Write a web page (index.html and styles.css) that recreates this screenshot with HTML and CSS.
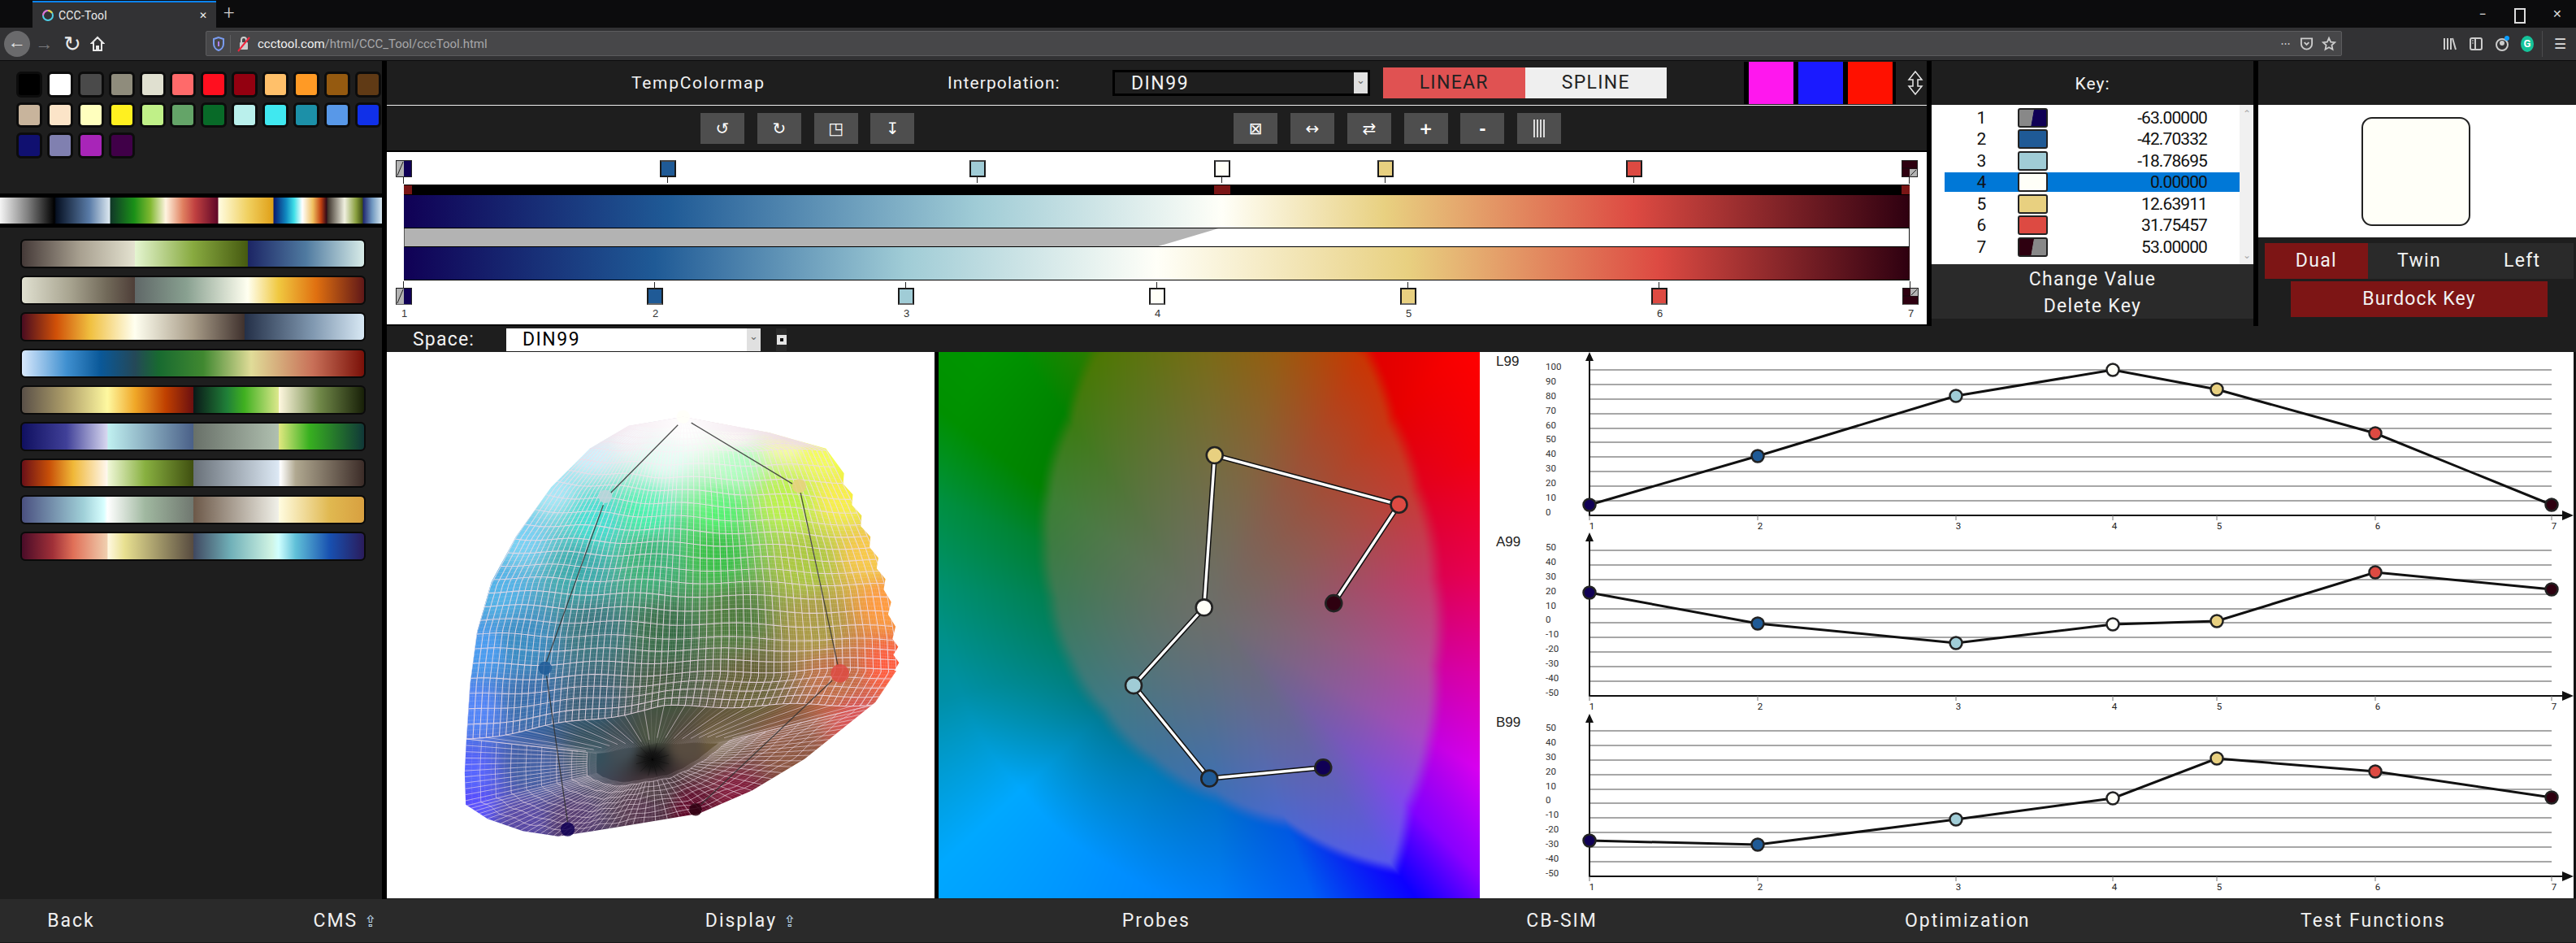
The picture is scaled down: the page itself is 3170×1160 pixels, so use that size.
FILE: index.html
```html
<!DOCTYPE html>
<html lang="en">
<head>
<meta charset="utf-8">
<title>CCC-Tool</title>
<link rel="stylesheet" href="styles.css">
</head>
<body>
<header class="chrome">
  <div class="tabbar">
    <div class="tab">
      <svg class="favicon" viewBox="0 0 16 20"><circle cx="8" cy="10" r="6" fill="none" stroke="#4fd0e8" stroke-width="2"/><path d="M8 4a6 6 0 0 0-6 6" fill="none" stroke="#e86ad0" stroke-width="2"/><path d="M8 4a6 6 0 0 1 5 3" fill="none" stroke="#e8d040" stroke-width="2"/></svg>
      <span class="tab-title">CCC-Tool</span>
      <span class="tab-close">✕</span>
    </div>
    <span class="tab-new">+</span>
    <div class="win-controls"><span>−</span><span class="win-max"></span><span class="win-x">✕</span></div>
  </div>
  <div class="toolbar">
    <span class="nav-back">←</span>
    <span class="nav-ico dim">→</span>
    <span class="nav-ico big">↻</span>
    <svg class="home" viewBox="0 0 18 20"><path d="M9 2 2 9h2v9h4v-5h2v5h4V9h2z" fill="none" stroke="#e8e8e8" stroke-width="2"/></svg>
    <div class="urlbar">
      <svg class="shield" viewBox="0 0 16 20"><path d="M8 2 2 4v6c0 4 3 7 6 8 3-1 6-4 6-8V4z" fill="none" stroke="#7a9cf0" stroke-width="2"/><path d="M8 7v6" stroke="#b080f0" stroke-width="2"/></svg>
      <span class="url-sep"></span>
      <svg class="lock" viewBox="0 0 16 20"><rect x="3" y="8" width="10" height="9" rx="1" fill="#ccc"/><path d="M5 8V5a3 3 0 0 1 6 0v3" fill="none" stroke="#ccc" stroke-width="2"/><path d="M1 19 15 2" stroke="#f0243c" stroke-width="2"/></svg>
      <span class="url"><b>ccctool.com</b>/html/CCC_Tool/cccTool.html</span>
      <span class="url-dots">•••</span>
      <svg class="url-ico" viewBox="0 0 18 20"><path d="M2 3h14v7a7 7 0 0 1-14 0z" fill="none" stroke="#ccc" stroke-width="2"/><path d="m6 8 3 3 3-3" fill="none" stroke="#ccc" stroke-width="2"/></svg>
      <svg class="url-ico star" viewBox="0 0 20 20"><path d="m10 2 2.4 5.4 5.6.6-4.2 3.8 1.2 5.7L10 14.700l-5 2.800 1.200-5.700L2 8l5.600-.6z" fill="none" stroke="#ccc" stroke-width="2"/></svg>
    </div>
    <svg class="tool-ico lib" viewBox="0 0 18 20"><path d="M2 3v14M6 3v14M10 3v14M12 3l4 14" fill="none" stroke="#ccc" stroke-width="2"/></svg>
    <svg class="tool-ico" viewBox="0 0 18 20"><rect x="2" y="3" width="14" height="14" rx="2" fill="none" stroke="#ccc" stroke-width="2"/><path d="M8 3v14" stroke="#ccc" stroke-width="2"/><path d="M4 6h2M4 9h2" stroke="#ccc"/></svg>
    <svg class="tool-ico" viewBox="0 0 18 20"><circle cx="9" cy="11" r="7" fill="none" stroke="#ccc" stroke-width="2"/><circle cx="9" cy="9" r="3" fill="#ccc"/><circle cx="15" cy="3" r="3" fill="#0a9dff"/></svg>
    <span class="grammarly">G</span>
    <span class="tool-sep"></span>
    <span class="hamburger">☰</span>
  </div>
</header>

<main class="app">
  <aside class="sidebar">
    <div class="palette">
      <span class="sw p1"></span><span class="sw p2"></span><span class="sw p3"></span><span class="sw p4"></span><span class="sw p5"></span><span class="sw p6"></span><span class="sw p7"></span><span class="sw p8"></span><span class="sw p9"></span><span class="sw p10"></span><span class="sw p11"></span><span class="sw p12"></span>
      <span class="sw p13"></span><span class="sw p14"></span><span class="sw p15"></span><span class="sw p16"></span><span class="sw p17"></span><span class="sw p18"></span><span class="sw p19"></span><span class="sw p20"></span><span class="sw p21"></span><span class="sw p22"></span><span class="sw p23"></span><span class="sw p24"></span>
      <span class="sw p25"></span><span class="sw p26"></span><span class="sw p27"></span><span class="sw p28"></span>
    </div>
    <div class="strip"></div>
    <div class="bands">
      <div class="band b1"></div><div class="band b2"></div><div class="band b3"></div>
      <div class="band b4"></div><div class="band b5"></div><div class="band b6"></div>
      <div class="band b7"></div><div class="band b8"></div><div class="band b9"></div>
    </div>
  </aside>

  <section class="content">
    <div class="editor">
      <div class="workspace">
        <div class="ws-head">
          <span class="ws-name">TempColormap</span>
          <span class="ws-interp">Interpolation:</span>
          <div class="select dark"><span>DIN99</span><i class="sel-arrow">⌄</i></div>
          <div class="toggle"><span class="tog-on">LINEAR</span><span class="tog-off">SPLINE</span></div>
          <div class="nan-swatches"><span class="ns-m"></span><span class="ns-b"></span><span class="ns-r"></span></div>
          <svg class="updown" viewBox="0 0 24 30"><path d="M12 1 4 11h5v8H4l8 10 8-10h-5v-8h5z" fill="none" stroke="#e8e8e8" stroke-width="1.500"/></svg>
        </div>
        <div class="ws-tools">
          <span class="tbtn">↺</span><span class="tbtn">↻</span><span class="tbtn">◳</span><span class="tbtn">↧</span>
          <span class="tbtn group2">⊠</span><span class="tbtn">↔</span><span class="tbtn">⇄</span><span class="tbtn bold">+</span><span class="tbtn bold">-</span>
          <span class="tbtn"><svg class="bars" viewBox="0 0 14 22"><path d="M1 0v22M5 0v22M9 0v22M13 0v22" stroke="#fff" stroke-width="1.600"/></svg></span>
        </div>
        <div class="ramp">
          <div class="keyrow keys-a">
            <span class="key k1 split pos-a0"><svg viewBox="0 0 20 21"><rect width="10" height="21" fill="#b3b3b3"/><rect x="10" width="10" height="21" fill="#100055"/><path d="M1 20 9 1" stroke="#111"/></svg></span>
            <span class="key k2 pos-a1"></span>
            <span class="key k3 pos-a2"></span>
            <span class="key k4 pos-a3"></span>
            <span class="key k5 pos-a4"></span>
            <span class="key k6 pos-a5"></span>
            <span class="key k7 split pos-a6"><svg viewBox="0 0 20 21"><rect width="20" height="21" fill="#2e0010"/><path d="M0 10h20" stroke="#111"/><rect x="10" y="11" width="10" height="10" fill="#b3b3b3"/><path d="M11 20 19 12" stroke="#111"/></svg></span>
          </div>
          <div class="markbar"><i class="mark pos-a0"></i><i class="mark pos-a3"></i><i class="mark pos-a6 last"></i></div>
          <div class="gbar upper"></div>
          <div class="tilt"><div class="tilt-fill"></div></div>
          <div class="gbar lower"></div>
          <div class="keyrow keys-b">
            <span class="key k1 split pos-b0"><svg viewBox="0 0 20 21"><rect width="10" height="21" fill="#b3b3b3"/><rect x="10" width="10" height="21" fill="#100055"/><path d="M1 20 9 1" stroke="#111"/></svg></span>
            <span class="key k2 pos-b1"></span>
            <span class="key k3 pos-b2"></span>
            <span class="key k4 pos-b3"></span>
            <span class="key k5 pos-b4"></span>
            <span class="key k6 pos-b5"></span>
            <span class="key k7 split pos-b6"><svg viewBox="0 0 20 21"><rect width="20" height="21" fill="#2e0010"/><path d="M0 10h20" stroke="#111"/><rect x="10" width="10" height="10" fill="#b3b3b3"/><path d="M11 9 19 1" stroke="#111"/></svg></span>
          </div>
          <div class="labelrow">
            <span class="pos-b0">1</span><span class="pos-b1">2</span><span class="pos-b2">3</span><span class="pos-b3">4</span><span class="pos-b4">5</span><span class="pos-b5">6</span><span class="pos-b6">7</span>
          </div>
        </div>
      </div>

      <div class="keypanel">
        <div class="panel-title">Key:</div>
        <div class="keylist">
          <div class="rows">
            <div class="row"><span class="num">1</span><span class="ksw hk1"></span><span class="val">-63.00000</span></div>
            <div class="row"><span class="num">2</span><span class="ksw hk2"></span><span class="val">-42.70332</span></div>
            <div class="row"><span class="num">3</span><span class="ksw hk3"></span><span class="val">-18.78695</span></div>
            <div class="row selected"><span class="num">4</span><span class="ksw hk4"></span><span class="val">0.00000</span></div>
            <div class="row"><span class="num">5</span><span class="ksw hk5"></span><span class="val">12.63911</span></div>
            <div class="row"><span class="num">6</span><span class="ksw hk6"></span><span class="val">31.75457</span></div>
            <div class="row"><span class="num">7</span><span class="ksw hk7"></span><span class="val">53.00000</span></div>
          </div>
          <div class="scroll"><span>⌃</span><span>⌄</span></div>
        </div>
        <div class="key-actions"><span>Change Value</span><span>Delete Key</span></div>
      </div>

      <div class="detail">
        <div class="detail-top"></div>
        <div class="detail-preview"><div class="big-swatch"></div></div>
        <div class="modes"><span class="mode on">Dual</span><span class="mode">Twin</span><span class="mode">Left</span></div>
        <div class="burdock">Burdock Key</div>
      </div>
    </div>

    <div class="space-row">
      <span class="space-label">Space:</span>
      <div class="select light"><span>DIN99</span><i class="sel-arrow">⌄</i></div>
      <span class="space-btn"><i></i></span>
    </div>

    <div class="views">
      <div class="view3d">
        <canvas id="gamut3d" width="674" height="672"></canvas>
        <svg class="overlay" viewBox="14 6 1554 1550">
          <path class="path3d" d="M527 1340 467 925M467 885 628 440M650 405 840 213M878 207 1165 380M1188 405 1294 895M1278 938 905 1290"/>
          <circle class="k1 o3" cx="527" cy="1360" r="20"/><circle class="k2 o3" cx="463" cy="903" r="19"/><circle class="k3 o3 pale" cx="634" cy="416" r="19"/><circle class="k4 o3" cx="855" cy="190" r="19"/><circle class="k5 o3" cx="1184" cy="386" r="20"/><circle class="k6 o3" cx="1300" cy="918" r="26"/><circle class="k7 o3" cx="890" cy="1304" r="18"/>
        </svg>
      </div>
      <div class="view2d">
        <canvas id="gamut2d" width="666" height="672"></canvas>
        <svg class="overlay" viewBox="12 8 1535 1550">
          <polyline class="pb" points="1103,1187 780,1218 565,954 765,733 795,301 1318,441 1133,721"/>
          <polyline class="pw" points="1103,1187 780,1218 565,954 765,733 795,301 1318,441 1133,721"/>
          <circle class="k1 o2" cx="1103" cy="1187" r="23"/><circle class="k2 o2" cx="780" cy="1218" r="23"/><circle class="k3 o2" cx="565" cy="954" r="23"/><circle class="k4 o2" cx="765" cy="733" r="23"/><circle class="k5 o2" cx="795" cy="301" r="23"/><circle class="k6 o2" cx="1318" cy="441" r="23"/><circle class="k7 o2" cx="1133" cy="721" r="23"/>
        </svg>
      </div>
      <div class="charts">
        <svg class="chart-svg" viewBox="1821 433 1349 672">
          <rect x="3167" y="433" width="3" height="672" fill="#111"/>
          <path class="grid" d="M1957 455H3140M1957 473H3140M1957 491H3140M1957 509H3140M1957 527H3140M1957 544H3140M1957 562H3140M1957 580H3140M1957 598H3140M1957 616H3140M1957 677H3140M1957 695H3140M1957 713H3140M1957 731H3140M1957 749H3140M1957 766H3140M1957 784H3140M1957 802H3140M1957 820H3140M1957 838H3140M1957 899H3140M1957 917H3140M1957 935H3140M1957 953H3140M1957 971H3140M1957 988H3140M1957 1006H3140M1957 1024H3140M1957 1042H3140M1957 1060H3140"/>
          <path class="axis" d="M1956 440V634H3156M1956 662V856H3156M1956 885V1078H3156"/>
          <path class="tick" d="M1956 634v6M2163 634v6M2407 634v6M2600 634v6M2728 634v6M2923 634v6M3140 634v6M1956 856v6M2163 856v6M2407 856v6M2600 856v6M2728 856v6M2923 856v6M3140 856v6M1956 1078v6M2163 1078v6M2407 1078v6M2600 1078v6M2728 1078v6M2923 1078v6M3140 1078v6"/>
          <path class="arrow" d="M1956 433l5 11h-10zM1956 655l5 11h-10zM1956 878l5 11h-10zM3167 634l-14-6v12zM3167 856l-14-6v12zM3167 1078l-14-6v12z"/>

          <text class="ctitle" x="1841" y="450">L99</text>
          <text class="ctitle" x="1841" y="672">A99</text>
          <text class="ctitle" x="1841" y="894">B99</text>

          <g class="ylab">
            <text x="1902" y="455">100</text><text x="1902" y="473">90</text><text x="1902" y="491">80</text><text x="1902" y="509">70</text><text x="1902" y="527">60</text><text x="1902" y="544">50</text><text x="1902" y="562">40</text><text x="1902" y="580">30</text><text x="1902" y="598">20</text><text x="1902" y="616">10</text><text x="1902" y="634">0</text>
            <text x="1902" y="677">50</text><text x="1902" y="695">40</text><text x="1902" y="713">30</text><text x="1902" y="731">20</text><text x="1902" y="749">10</text><text x="1902" y="766">0</text><text x="1902" y="784">-10</text><text x="1902" y="802">-20</text><text x="1902" y="820">-30</text><text x="1902" y="838">-40</text><text x="1902" y="856">-50</text>
            <text x="1902" y="899">50</text><text x="1902" y="917">40</text><text x="1902" y="935">30</text><text x="1902" y="953">20</text><text x="1902" y="971">10</text><text x="1902" y="988">0</text><text x="1902" y="1006">-10</text><text x="1902" y="1024">-20</text><text x="1902" y="1042">-30</text><text x="1902" y="1060">-40</text><text x="1902" y="1078">-50</text>
          </g>
          <g class="xlab">
            <text x="1959" y="651">1</text><text x="2166" y="651">2</text><text x="2410" y="651">3</text><text x="2602" y="651">4</text><text x="2731" y="651">5</text><text x="2926" y="651">6</text><text x="3143" y="651">7</text>
            <text x="1959" y="873">1</text><text x="2166" y="873">2</text><text x="2410" y="873">3</text><text x="2602" y="873">4</text><text x="2731" y="873">5</text><text x="2926" y="873">6</text><text x="3143" y="873">7</text>
            <text x="1959" y="1095">1</text><text x="2166" y="1095">2</text><text x="2410" y="1095">3</text><text x="2602" y="1095">4</text><text x="2731" y="1095">5</text><text x="2926" y="1095">6</text><text x="3143" y="1095">7</text>
          </g>

          <polyline class="cline" points="1956,621 2163,561 2407,487 2600,455 2728,479 2923,533 3140,621"/>
          <polyline class="cline" points="1956,729 2163,767 2407,791 2600,768 2728,764 2923,704 3140,725"/>
          <polyline class="cline" points="1956,1034 2163,1039 2407,1008 2600,982 2728,933 2923,949 3140,981"/>
          <g class="dots">
            <circle class="k1" cx="1956" cy="621"/><circle class="k2" cx="2163" cy="561"/><circle class="k3" cx="2407" cy="487"/><circle class="k4" cx="2600" cy="455"/><circle class="k5" cx="2728" cy="479"/><circle class="k6" cx="2923" cy="533"/><circle class="k7" cx="3140" cy="621"/>
            <circle class="k1" cx="1956" cy="729"/><circle class="k2" cx="2163" cy="767"/><circle class="k3" cx="2407" cy="791"/><circle class="k4" cx="2600" cy="768"/><circle class="k5" cx="2728" cy="764"/><circle class="k6" cx="2923" cy="704"/><circle class="k7" cx="3140" cy="725"/>
            <circle class="k1" cx="1956" cy="1034"/><circle class="k2" cx="2163" cy="1039"/><circle class="k3" cx="2407" cy="1008"/><circle class="k4" cx="2600" cy="982"/><circle class="k5" cx="2728" cy="933"/><circle class="k6" cx="2923" cy="949"/><circle class="k7" cx="3140" cy="981"/>
          </g>
        </svg>
      </div>
    </div>
  </section>
</main>

<nav class="appnav">
  <span>Back</span>
  <span>CMS <i>⇪</i></span>
  <span>Display <i>⇪</i></span>
  <span>Probes</span>
  <span>CB-SIM</span>
  <span>Optimization</span>
  <span>Test Functions</span>
</nav>
<script src="script.js"></script>
</body>
</html>
```
FILE: styles.css
```css
* { box-sizing: border-box; }
html, body { margin: 0; padding: 0; }
body {
  width: 3170px; height: 1160px; overflow: hidden;
  background: #1e1e1e; color: #f2f2f2;
  font-family: Roboto, "Liberation Sans", sans-serif;
}

/* browser chrome */
.chrome { height: 75px; }
.tabbar { height: 34px; background: #0c0c0d; display: flex; align-items: stretch; padding-left: 40px; }
.tab { width: 226px; background: #323234; border-top: 2px solid #0a84ff; margin-top: 1px; display: flex; align-items: center; padding-left: 11px; font-size: 14px; color: #eee; }
.favicon { width: 16px; height: 20px; margin-right: 5px; }
.tab-title { flex: 1; letter-spacing: .2px; }
.tab-close { font-size: 12px; margin-right: 11px; }
.tab-new { font-size: 24px; font-weight: 300; color: #ccc; margin: 0 0 0 9px; width: 16px; line-height: 32px; }
.win-controls { margin-left: auto; display: flex; width: 138px; align-items: center; font-size: 16px; color: #ddd; }
.win-controls > span { width: 46px; text-align: center; }
.win-max { display: block; height: 15px; position: relative; }
.win-max::after { content: ""; display: block; width: 10px; height: 15px; border: 2px solid #ddd; margin: 0 auto; }
.win-x { font-size: 14px; font-weight: 300; }
.toolbar { height: 41px; background: #323234; border-bottom: 1px solid #0c0c0d; display: flex; align-items: center; padding-left: 5px; color: #e8e8e8; }
.nav-back { width: 32px; height: 32px; border-radius: 50%; background: #6a6a6c; text-align: center; font-size: 22px; line-height: 28px; }
.nav-ico { width: 33px; text-align: center; font-size: 22px; margin-left: 1px; }
.nav-ico.dim { color: #77777a; }
.nav-ico.big { font-size: 26px; line-height: 30px; }
.home { width: 18px; height: 20px; margin-left: 6px; }
.urlbar { width: 2629px; height: 31px; margin-left: 124px; margin-top: -1px; background: #474749; border: 1px solid #5c5c5e; border-radius: 2px; display: flex; align-items: center; padding-left: 7px; }
.shield { width: 16px; height: 20px; }
.url-sep { width: 1px; height: 22px; background: #5f5f61; margin: 0 8px 0 6px; }
.lock { width: 16px; height: 20px; }
.url { font-size: 15px; color: #a8a8aa; margin-left: 9px; flex: 1; }
.url b { font-weight: 400; color: #f2f2f2; }
.url-dots { font-size: 9px; letter-spacing: 1px; color: #ccc; }
.url-ico { width: 17px; height: 20px; margin-left: 11px; }
.url-ico.star { width: 18px; margin-left: 10px; margin-right: 6px; }
.tool-ico { width: 18px; height: 20px; margin-left: 14px; }
.tool-ico.lib { margin-left: 124px; }
.grammarly { width: 16px; height: 20px; margin-left: 14px; border-radius: 50%; background: #15c39a; color: #fff; text-align: center; font-size: 13px; line-height: 20px; font-weight: 700; }
.tool-sep { width: 1px; height: 32px; background: #4c4c4e; margin: 0 14px 0 10px; }
.hamburger { font-size: 17px; color: #ddd; }

/* layout */
.app { height: 1031px; display: flex; }
.sidebar { width: 470px; flex: none; padding-top: 13px; background: #1e1e1e; }
.content { flex: 1; border-left: 6px solid #000; min-width: 0; display: flex; flex-direction: column; }

/* palette */
.palette { display: grid; grid-template-columns: repeat(12, 32px); column-gap: 5.900px; row-gap: 6px; padding-left: 20px; height: 150px; align-content: start; }
.sw { height: 31.500px; border: 3px solid #0c0c0c; border-radius: 6px; }
.p1 { background: #000; } .p2 { background: #fff; } .p3 { background: #4a4a4a; } .p4 { background: #8f8c7c; } .p5 { background: #e0e0d0; } .p6 { background: #ff6a6a; } .p7 { background: #ff0f1f; } .p8 { background: #930010; } .p9 { background: #ffc06a; } .p10 { background: #ff9a25; } .p11 { background: #955a10; } .p12 { background: #603a15; }
.p13 { background: #c8b49c; } .p14 { background: #fbe4c8; } .p15 { background: #ffffbe; } .p16 { background: #fff020; } .p17 { background: #c0f088; } .p18 { background: #64a468; } .p19 { background: #086a28; } .p20 { background: #baf0ec; } .p21 { background: #40e8f0; } .p22 { background: #1c90a8; } .p23 { background: #5898e8; } .p24 { background: #1030e8; }
.p25 { background: #101070; } .p26 { background: #8080b0; } .p27 { background: #a825b8; } .p28 { background: #400048; }

.strip {
  height: 42px; border-top: 5px solid #000; border-bottom: 5px solid #000;
  background: linear-gradient(90deg,
    #f4f4f4 0, #808080 34px, #000 67px,
    #061022 69px, #5a7ca8 110px, #dce8f0 135px,
    #103828 136px, #1a9018 165px, #80b830 185px, #fff4e0 204px, #e08060 225px, #c04040 240px, #600828 268px,
    #fffce0 269px, #f0d060 305px, #e0a018 336px,
    #0a1a70 337px, #1088c0 352px, #40e0e8 362px, #fff 372px, #f0c060 385px, #c04010 395px, #300818 402px,
    #3a3028 403px, #f0f0e0 424px, #8aa040 438px, #405010 446px,
    #202870 447px, #7098c0 458px, #d8e8f0 470px);
}

.bands { padding: 14px 20px 0 25px; display: flex; flex-direction: column; gap: 9px; }
.band { height: 36px; border: 2px solid #0a0a0a; border-radius: 6px; background-clip: padding-box; }
.b1 { background-image: linear-gradient(90deg, #453a38 0, #a8a090 17%, #e4e2d0 33%, #e4f5d0 33.1%, #88aa40 50%, #465a10 66%, #1c2565 66.1%, #4f7aa0 83%, #d8ece8 100%); }
.b2 { background-image: linear-gradient(90deg, #e0e0d0 0, #a8a490 14%, #706858 25%, #4e3e38 33%, #606868 33.1%, #88a090 48%, #fffff0 66%, #f0c840 75%, #e07010 86%, #601818 100%); }
.b3 { background-image: linear-gradient(90deg, #4a0c20 0, #d05008 10%, #f0c040 20%, #fffff0 33%, #a89c88 50%, #40322e 65%, #243048 65.1%, #8098b0 85%, #d8e8f4 100%); }
.b4 { background-image: linear-gradient(90deg, #d8e8fc 0, #4090d0 13%, #0a5898 23%, #244858 33%, #186a30 40%, #408830 53%, #e0dc98 67%, #c87058 85%, #7a1008 100%); }
.b5 { background-image: linear-gradient(90deg, #5a5048 0, #b0a06a 13%, #fef8a0 25%, #f0a828 33%, #c04000 42%, #6c1010 50%, #0a1818 50.1%, #208038 60%, #40b020 65%, #dce88c 75%, #fff8e0 75.1%, #708848 87%, #182008 100%); }
.b6 { background-image: linear-gradient(90deg, #101060 0, #404098 13%, #d8d8f0 25%, #c0f0f0 25.1%, #4a6088 50%, #687068 50.1%, #b0c0b0 75%, #e0e880 75.1%, #38b020 84%, #103838 100%); }
.b7 { background-image: linear-gradient(90deg, #6a1018 0, #c85008 8%, #f0b838 15%, #fff8f0 25%, #f0f8d8 25.1%, #88b040 36%, #405010 50%, #687078 50.1%, #dce8f4 75%, #fff 75.500%, #b0a890 80%, #3c2c28 100%); }
.b8 { background-image: linear-gradient(90deg, #4a5080 0, #a0d0d8 18%, #d8ffff 24%, #fff 25%, #a0b8a0 36%, #707870 50%, #6c5848 50.1%, #f0f0e8 75%, #fffce0 75.1%, #e0b850 90%, #d8a040 100%); }
.b9 { background-image: linear-gradient(90deg, #4a0c28 0, #a03038 9%, #e07058 15%, #f0d0b0 25%, #fff8e0 25.1%, #e8e090 30%, #584c40 50%, #404860 50.1%, #70b0b8 61%, #d0f4e4 73%, #d0ffff 75%, #60c0d8 80%, #1850b0 90%, #2a1c5c 100%); }

/* editor */
.editor { height: 326px; display: flex; flex: none; }
.workspace { width: 1895px; flex: none; }
.ws-head { height: 55px; border-bottom: 1px solid #eee; display: flex; align-items: center; padding-left: 301px; }
.ws-name { font-size: 21px; letter-spacing: 1.700px; width: 164px; white-space: nowrap; }
.ws-interp { font-size: 21px; letter-spacing: 1.100px; width: 139px; margin-left: 225px; white-space: nowrap; }
.select { display: flex; align-items: center; font-size: 23px; letter-spacing: 1.500px; }
.select > span { flex: 1; padding-left: 20px; }
.select.dark { width: 317px; height: 32px; margin-left: 64px; background: #1e1e1e; border: 3px solid #000; color: #f2f2f2; }
.select.light { width: 313px; height: 28px; background: #fff; color: #000; }
.sel-arrow { font-style: normal; width: 17px; align-self: stretch; background: #e0e0e0; color: #666; font-size: 13px; line-height: 20px; text-align: center; letter-spacing: 0; }
.toggle { display: flex; width: 349px; height: 38px; margin-left: 16px; font-size: 23px; letter-spacing: 1.300px; color: #222; text-align: center; line-height: 38px; }
.toggle span { flex: 1; }
.tog-on { background: #e05252; }
.tog-off { background: #efefef; }
.nan-swatches { display: flex; height: 52px; margin-left: 95px; background: #000; padding: 0 0 0 6px; gap: 6px; width: 187px; }
.nan-swatches span { width: 55px; }
.ns-m { background: #ff17ee; } .ns-b { background: #1a1aff; } .ns-r { background: #ff1100; }
.updown { width: 24px; height: 30px; margin-left: 12px; }

.ws-tools { height: 55px; display: flex; align-items: center; gap: 15.800px; padding: 1px 0 0 386px; }
.tbtn { width: 54px; height: 38px; background: #4e4e4e; color: #fff; text-align: center; font: 20px/38px "DejaVu Sans", sans-serif; display: flex; align-items: center; justify-content: center; }
.tbtn.bold { font-weight: 700; }
.group2 { margin-left: 377px; }
.bars { width: 14px; height: 22px; }

.ramp { height: 216px; background: #fff; border-top: 2px solid #000; border-bottom: 2px solid #000; padding: 10px 21px 0; color: #333; }
.keyrow { position: relative; height: 30px; }
.key { position: absolute; width: 20px; height: 21px; margin-left: -10px; border: 2px solid #1a1a1a; border-top-color: #444; }
.key.split { border: 1px solid #222; }
.key svg { display: block; width: 100%; height: 100%; }
.keys-a .key { top: 0; }
.keys-b .key { top: 9px; border-top-color: #1a1a1a; border-bottom-color: #666; }
.keys-a .key::after { content: ""; position: absolute; left: 50%; top: 100%; margin-left: -1px; width: 1px; height: 9px; background: #222; }
.keys-b .key::after { content: ""; position: absolute; left: 50%; bottom: 100%; margin-left: -1px; width: 1px; height: 9px; background: #222; }
.key.k1 { background: #100055; } .key.k2 { background: #1f5a96; } .key.k3 { background: #a0ccd6; } .key.k4 { background: #fffff8; } .key.k5 { background: #e8d080; } .key.k6 { background: #dd4a42; } .key.k7 { background: #2e0010; }

.pos-a0 { left: 0; } .pos-a1 { left: 325px; } .pos-a2 { left: 706px; } .pos-a3 { left: 1007px; } .pos-a4 { left: 1208px; } .pos-a5 { left: 1514px; } .pos-a6 { left: 1853px; }
.pos-b0 { left: 0; } .pos-b1 { left: 309px; } .pos-b2 { left: 618px; } .pos-b3 { left: 927px; } .pos-b4 { left: 1236px; } .pos-b5 { left: 1545px; } .pos-b6 { left: 1854px; }

.markbar { position: relative; height: 13px; background: #000; }
.mark { position: absolute; top: 1px; width: 20px; height: 11px; background: #7a1515; }
.mark.pos-a0 { width: 10px; }
.mark.pos-a3 { margin-left: -10px; }
.mark.last { margin-left: -10px; width: 10px; }
.gbar { height: 41px; border-bottom: 1px solid #000; }
.upper { background: linear-gradient(90deg, #100055 0, #1f5a96 17.54%, #a0ccd6 38.1%, #fffff8 54.34%, #e8d080 65.19%, #dd4a42 81.7%, #2e0010 100%); }
.lower { background: linear-gradient(90deg, #100055 0, #1f5a96 16.67%, #a0ccd6 33.33%, #fffff8 50%, #e8d080 66.67%, #dd4a42 83.33%, #2e0010 100%); }
.tilt { height: 23px; border-bottom: 1px solid #000; background: #fff; border-left: 1px solid #555; border-right: 1px solid #111; }
.tilt-fill { height: 22px; background: #b3b3b3; clip-path: polygon(0 0, 54.1% 0, 50.1% 100%, 0 100%); }
.labelrow { position: relative; height: 20px; font: 13px/22px "Liberation Sans", sans-serif; }
.labelrow span { position: absolute; top: 0; margin-left: -3px; }

/* key panel */
.keypanel { width: 402px; flex: none; border-left: 6px solid #000; display: flex; flex-direction: column; }
.panel-title { height: 54px; font-size: 21px; line-height: 56px; text-align: center; letter-spacing: 1px; }
.keylist { height: 196px; background: #fff; display: flex; padding-left: 16px; color: #111; }
.rows { width: 363px; padding-top: 3.500px; }
.row { height: 24px; margin-bottom: 2.600px; display: grid; grid-template-columns: 90px 37px 23px 1fr 40px; align-items: center; font-size: 21px; letter-spacing: -.9px; }
.row .num { text-align: center; }
.row .val { grid-column: 4; text-align: right; }
.row.selected { background: #0078d7; }
.ksw { height: 24px; border: 2px solid #222; border-radius: 3px; }
.hk1 { background: linear-gradient(100deg, #888 0 48%, #100055 50%); }
.hk2 { background: #1f5a96; } .hk3 { background: #a0ccd6; } .hk4 { background: #fffff8; } .hk5 { background: #e8d080; } .hk6 { background: #dd4a42; }
.hk7 { background: linear-gradient(100deg, #2e0010 0 48%, #888 50%); }
.scroll { flex: 1; background: #f0f0f0; color: #aaa; font-size: 12px; display: flex; flex-direction: column; justify-content: space-between; text-align: center; padding: 4px 0; }
.key-actions { height: 67px; background: #2a2a2a; display: flex; flex-direction: column; align-items: center; gap: 3px; font-size: 23px; letter-spacing: 1.300px; line-height: 30px; padding-top: 4px; }

/* detail */
.detail { flex: 1; border-left: 6px solid #000; display: flex; flex-direction: column; }
.detail-top { height: 54px; }
.detail-preview { height: 163px; background: #fff; display: flex; align-items: center; justify-content: center; }
.big-swatch { width: 134px; height: 134px; margin-left: -4px; border: 2px solid #222; border-radius: 13px; background: #fffff8; }
.modes { display: flex; margin: 7px 3px 3px 8px; height: 44px; background: #2a2a2a; font-size: 23px; letter-spacing: 1.300px; line-height: 44px; text-align: center; }
.mode { flex: 1; }
.mode.on { background: #7d1515; }
.burdock { margin: 0 35px 0 40px; height: 44px; background: #7d1515; text-align: center; line-height: 44px; font-size: 23px; letter-spacing: 1.100px; }

/* space row */
.space-row { height: 32px; flex: none; display: flex; align-items: center; padding: 1px 0 0 32px; }
.space-label { width: 115px; font-size: 23px; letter-spacing: 1.200px; }
.space-btn { width: 13px; height: 28px; margin-left: 19px; background: #2a2a2a; display: flex; align-items: center; justify-content: center; }
.space-btn i { width: 12px; height: 12px; background: #e4e4e4; position: relative; }
.space-btn i::after { content: ""; position: absolute; left: 4px; top: 4px; width: 4px; height: 4px; background: #111; }

/* views */
.views { height: 672px; flex: none; display: flex; }
.view3d { width: 679px; flex: none; position: relative; background: #fff; border-right: 5px solid #000; }
.view2d { width: 666px; flex: none; position: relative; }
.view3d canvas, .view2d canvas { display: block; }
.overlay { position: absolute; left: 0; top: 0; width: 100%; height: 100%; }
.view3d .overlay { width: 674px; }
.charts { flex: 1; background: #fff; min-width: 0; }
.chart-svg { display: block; width: 1349px; height: 672px; }

.path3d { fill: none; stroke: #333; stroke-width: 3; opacity: .85; }
.o3 { opacity: .85; }
.pb { fill: none; stroke: #111; stroke-width: 15; }
.pw { fill: none; stroke: #fff; stroke-width: 8; }
.o2 { stroke: #222; stroke-width: 6; }
circle.k1 { fill: #100055; } circle.k2 { fill: #1f5a96; } circle.k3 { fill: #a0ccd6; } circle.k4 { fill: #fffff8; } circle.k5 { fill: #e8d080; } circle.k6 { fill: #dd4a42; } circle.k7 { fill: #2e0010; }
circle.pale { fill: #c0d4da; }

.grid { stroke: #8a8a8a; stroke-width: 1.500; fill: none; }
.axis { stroke: #111; stroke-width: 2; fill: none; }
.tick { stroke: #777; stroke-width: 1; fill: none; }
.arrow { fill: #111; }
.ctitle { font: 17px "Liberation Sans", sans-serif; fill: #222; }
.ylab text { font: 11.500px Roboto, sans-serif; fill: #333; }
.xlab text { font: 11.500px Roboto, sans-serif; fill: #222; text-anchor: middle; }
.cline { fill: none; stroke: #111; stroke-width: 3; }
.dots circle { r: 7.500px; stroke: #222; stroke-width: 2.500; }

/* bottom */
.appnav { height: 54px; background: #2a2a2a; border-bottom: 1px solid #181818; display: grid; grid-template-columns: 175px repeat(6, 1fr); align-items: center; text-align: center; font-size: 23px; letter-spacing: 2px; color: #f0f0f0; }
.appnav span { white-space: nowrap; }
.appnav i { font: normal 19px "DejaVu Sans", sans-serif; color: #b8d4e8; letter-spacing: 0; }
```
FILE: script.js
```js
function rgb(h) {
  return [parseInt(h.slice(1, 3), 16), parseInt(h.slice(3, 5), 16), parseInt(h.slice(5, 7), 16)];
}
function lerp(a, b, t) { return a + (b - a) * t; }

/* ---------- 3D gamut ---------- */
function drawGamut3D() {
  var cv = document.getElementById('gamut3d');
  var ctx = cv.getContext('2d');
  var W = cv.width, H = cv.height;
  var K = 2.306, OX = 14, OY = 6;
  var pole = [768, 1162];
  var pts = [
    [855,200,'#ffffff'],[700,225,'#f0faff'],[1000,225,'#fdfff0'],[1150,250,'#f8ffa0'],[1250,290,'#f4ff50'],
    [590,285,'#c8f4ff'],[800,300,'#c0ffe8'],[1000,320,'#90ffa8'],[480,395,'#a0e8f8'],[1300,420,'#f8f040'],
    [1150,430,'#b8f440'],[950,450,'#48f468'],[750,450,'#38f4a8'],[600,480,'#38e0d0'],[390,535,'#70d0f4'],
    [1380,580,'#f8c840'],[1200,600,'#a8c838'],[950,580,'#30c040'],[760,600,'#30b070'],[560,620,'#30a8a8'],
    [330,680,'#48b0e8'],[1430,720,'#ff9838'],[1230,780,'#a89a40'],[1000,760,'#487838'],[800,800,'#306840'],
    [600,800,'#307078'],[400,830,'#3088c0'],[285,850,'#4098f0'],[1440,900,'#ff5838'],[1290,930,'#c06a40'],
    [1050,950,'#605c30'],[800,960,'#3c5438'],[600,1000,'#305870'],[420,1000,'#3068a8'],[265,1020,'#4a80f8'],
    [1350,1050,'#d84848'],[1150,1120,'#885038'],[950,1100,'#6a5a3c'],[768,1162,'#141414'],[600,1130,'#34505c'],
    [768,1085,'#4c5644'],[680,1120,'#445058'],[860,1120,'#584c40'],
    [420,1180,'#3858a0'],[250,1200,'#5060ff'],[250,1290,'#5048ff'],[1000,1260,'#801838'],[880,1300,'#600828'],
    [740,1310,'#503048'],[768,1240,'#4a3a40'],[540,1340,'#4a3068'],[400,1340,'#5040a0']
  ].map(function (p) { return [p[0], p[1], rgb(p[2])]; });

  var off = document.createElement('canvas');
  off.width = W; off.height = H;
  var oc = off.getContext('2d');
  var img = oc.createImageData(W, H), d = img.data;
  for (var y = 0; y < H; y++) {
    for (var x = 0; x < W; x++) {
      var zx = OX + x * K, zy = OY + y * K;
      if (zx < 220 || zx > 1480 || zy < 180 || zy > 1400) continue;
      var sw = 0, r = 0, g = 0, b = 0;
      for (var i = 0; i < pts.length; i++) {
        var dx = zx - pts[i][0], dy = zy - pts[i][1];
        var d2 = dx * dx + dy * dy + 1;
        var w = 1 / (d2 * Math.sqrt(d2));
        sw += w; r += w * pts[i][2][0]; g += w * pts[i][2][1]; b += w * pts[i][2][2];
      }
      var o = (y * W + x) * 4;
      d[o] = r / sw; d[o + 1] = g / sw; d[o + 2] = b / sw; d[o + 3] = 255;
    }
  }
  oc.putImageData(img, 0, 0);

  var left = [[855,190],[700,215],[590,280],[480,390],[380,530],[310,660],[270,800],[250,950],[240,1100],[235,1200],[238,1290],[400,1365],[600,1350],[768,1162]];
  var right = [[855,190],[1100,235],[1260,280],[1340,440],[1390,560],[1430,680],[1455,820],[1460,910],[1400,1000],[1300,1080],[1200,1160],[1050,1250],[900,1315],[768,1162]];
  var axisY = [190,225,285,415,545,670,810,930,1010,1060,1100,1130,1150,1162];

  function along(list, t) {
    var f = t * (list.length - 1), i = Math.min(list.length - 2, Math.floor(f)), u = f - i;
    return [lerp(list[i][0], list[i + 1][0], u), lerp(list[i][1], list[i + 1][1], u)];
  }
  function axisAt(t) {
    var f = t * 13, i = Math.min(12, Math.floor(f)), u = f - i;
    return lerp(axisY[i], axisY[i + 1], u);
  }
  function mesh(m, t) {
    var s = along(m < 0 ? left : right, t);
    var ax = lerp(855, 768, t), ay = axisAt(t), a = Math.abs(m);
    var wob = 5 * Math.sin(m * 11 + t * 17) * Math.min(1, t * 4);
    return [lerp(ax, s[0], a), lerp(ay, s[1], a) + wob];
  }

  ctx.save();
  ctx.scale(1 / K, 1 / K);
  ctx.translate(-OX, -OY);
  ctx.beginPath();
  var outline = [];
  left.slice(0, 11).forEach(function (p) { outline.push(p); });
  outline.push([300,1330],[400,1365],[500,1380],[600,1365],[720,1345],[900,1315],[1050,1250],[1200,1160],[1300,1080],[1400,1000],[1460,910]);
  var rs = [[1460,910],[1455,820],[1430,680],[1390,560],[1340,440],[1290,320]];
  for (var q = 0; q < rs.length - 1; q++) {
    for (var n = 0; n < 4; n++) {
      var u = n / 4;
      var px = lerp(rs[q][0], rs[q + 1][0], u), py = lerp(rs[q][1], rs[q + 1][1], u);
      outline.push([px + (n % 2 ? 9 : -6), py]);
    }
  }
  outline.push([1260,280],[1100,235]);
  outline.forEach(function (p, i) { if (i) ctx.lineTo(p[0], p[1]); else ctx.moveTo(p[0], p[1]); });
  ctx.closePath();
  ctx.clip();
  ctx.drawImage(off, OX, OY, W * K, H * K);

  // meridians run down from the white apex to the line just above the pole
  var END = 0.62;
  function stroke(nM, nT, style, width) {
    ctx.strokeStyle = style; ctx.lineWidth = width; ctx.beginPath();
    var i, j, p;
    for (i = -nM; i <= nM; i++) {
      for (j = 0; j <= 120; j++) {
        p = mesh(i / nM, j / 120 * END);
        if (j) ctx.lineTo(p[0], p[1]); else ctx.moveTo(p[0], p[1]);
      }
    }
    for (j = 1; j <= nT; j++) {
      var t = j / nT * END;
      for (i = -60; i <= 60; i++) {
        p = mesh(i / 60, t);
        if (i > -60) ctx.lineTo(p[0], p[1]); else ctx.moveTo(p[0], p[1]);
      }
    }
    ctx.stroke();
  }
  // lower edge of the mesh, from the right end of the last latitude round to its left end
  var lowPts = [mesh(1, END), [1300,1080],[1200,1160],[1050,1250],[900,1315],[720,1345],[600,1365],[500,1380],[400,1365],[300,1330],[238,1290],[235,1200], mesh(-1, END)];
  function lowAt(f) {
    var g = f * (lowPts.length - 1), i = Math.min(lowPts.length - 2, Math.floor(g)), v = g - i;
    return [lerp(lowPts[i][0], lowPts[i + 1][0], v), lerp(lowPts[i][1], lowPts[i + 1][1], v)];
  }
  // the cap below the last latitude: spokes from the pole, rings only on the lower side
  function web(count, rings, start, style, width) {
    var i, j, p;
    ctx.strokeStyle = style; ctx.lineWidth = width; ctx.beginPath();
    for (i = 0; i <= count; i++) {
      p = lowAt(i / count);
      ctx.moveTo(lerp(pole[0], p[0], start), lerp(pole[1], p[1], start));
      ctx.lineTo(p[0], p[1]);
    }
    for (j = 0; j < rings; j++) {
      var v = start + (1 - start) * j / rings;
      for (i = 0; i <= 120; i++) {
        p = lowAt(i / 120);
        var X = lerp(pole[0], p[0], v), Y = lerp(pole[1], p[1], v) + 3 * v * Math.sin(i * 0.7 + j);
        if (i) ctx.lineTo(X, Y); else ctx.moveTo(X, Y);
      }
    }
    ctx.stroke();
  }
  // short, sparse spokes join the pole to the last latitude above it
  function topSpokes(count, start, style, width) {
    ctx.strokeStyle = style; ctx.lineWidth = width; ctx.beginPath();
    for (var i = 0; i <= count; i++) {
      var p = mesh(-1 + 2 * i / count, END);
      ctx.moveTo(lerp(pole[0], p[0], start), lerp(pole[1], p[1], start));
      ctx.lineTo(p[0], p[1]);
    }
    ctx.stroke();
  }
  stroke(110, 90, 'rgba(240,232,236,.3)', 1.2);
  web(200, 20, 0.3, 'rgba(238,224,232,.26)', 1.1);
  topSpokes(60, 0.3, 'rgba(238,224,232,.3)', 1.1);
  stroke(30, 28, 'rgba(238,220,232,.85)', 2.5);
  web(64, 8, 0.35, 'rgba(238,220,232,.7)', 2);
  topSpokes(20, 0.4, 'rgba(238,220,232,.6)', 2);

  // the top fades towards white, as the mesh reaches full lightness
  var glow = ctx.createRadialGradient(855, 190, 0, 855, 190, 300);
  glow.addColorStop(0, 'rgba(255,255,255,.95)');
  glow.addColorStop(1, 'rgba(255,255,255,0)');
  ctx.fillStyle = glow;
  ctx.fillRect(500, 150, 700, 350);

  // fine dark spokes right at the pole
  ctx.strokeStyle = 'rgba(10,10,10,.7)';
  ctx.lineWidth = 1.2;
  ctx.beginPath();
  for (var s = 0; s < 24; s++) {
    var ang = s / 24 * Math.PI * 2, len = 24 + 24 * (s % 2);
    ctx.moveTo(pole[0], pole[1]);
    ctx.lineTo(pole[0] + Math.cos(ang) * len, pole[1] + Math.sin(ang) * len);
  }
  ctx.stroke();
  ctx.restore();
}

/* ---------- 2D slice ---------- */
function drawGamut2D() {
  var cv = document.getElementById('gamut2d');
  var ctx = cv.getContext('2d');
  var W = cv.width, H = cv.height, K = 2.306;
  var cx = 780, cy = 750;
  // angle (deg clockwise from up), gamut radius, inner rim, just outside, far outside
  var table = [
    [0,   900, '#7e6a00', '#7e6a00', '#7e6a00'],
    [15,  880, '#a05800', '#a05800', '#a05800'],
    [31,  868, '#cc3400', '#e00000', '#e80000'],
    [43,  757, '#cc3410', '#e40000', '#ff0000'],
    [59,  686, '#c83a30', '#e00020', '#ff0000'],
    [81,  648, '#c83868', '#dc0050', '#ff0050'],
    [103, 657, '#b84898', '#d000a0', '#f000b8'],
    [120, 720, '#a848c8', '#c000e0', '#f000ff'],
    [134, 785, '#8048f0', '#8000ff', '#9000ff'],
    [144, 894, '#5858f0', '#1000ff', '#0000ff'],
    [160, 630, '#4a68d0', '#0058e0', '#0060ff'],
    [178, 520, '#3a70b8', '#0070c8', '#0080ff'],
    [201, 449, '#3a74a0', '#007ab0', '#0090ff'],
    [227, 410, '#3a7a8a', '#007a90', '#00a8ff'],
    [252, 420, '#3a7a70', '#008070', '#0090a8'],
    [276, 453, '#3a7a55', '#008050', '#009070'],
    [293, 511, '#3a7c40', '#008030', '#009040'],
    [307, 578, '#3a8030', '#008000', '#009000'],
    [324, 680, '#3a7c10', '#008000', '#009800'],
    [336, 812, '#4a7800', '#2c7c00', '#289000'],
    [345, 860, '#5a7400', '#507800', '#507800'],
    [360, 900, '#7e6a00', '#7e6a00', '#7e6a00']
  ].map(function (e) { return [e[0], e[1], rgb(e[2]), rgb(e[3]), rgb(e[4])]; });
  var gray = rgb('#6c6e6a');
  var img = ctx.createImageData(W, H), d = img.data;
  function mix(a, b, t) { return [lerp(a[0], b[0], t), lerp(a[1], b[1], t), lerp(a[2], b[2], t)]; }
  for (var y = 0; y < H; y++) {
    for (var x = 0; x < W; x++) {
      var zx = 12 + x * K - cx, zy = 8 + y * K - cy;
      var a = Math.atan2(zx, -zy) * 180 / Math.PI;
      if (a < 0) a += 360;
      var i = 0;
      while (i < table.length - 2 && table[i + 1][0] <= a) i++;
      var A = table[i], B = table[i + 1];
      var u = (a - A[0]) / (B[0] - A[0]);
      var R = lerp(A[1], B[1], u);
      var inner = mix(A[2], B[2], u), near = mix(A[3], B[3], u), far = mix(A[4], B[4], u);
      var r = Math.sqrt(zx * zx + zy * zy);
      var q = r / R;
      var cIn = mix(gray, inner, Math.pow(Math.min(1, q), 1.25));
      var cOut = mix(near, far, Math.min(1, Math.max(0, (r - R) / 320)));
      var e = Math.min(1, Math.max(0, (r - R + 30) / 60));
      var c = mix(cIn, cOut, e * e * (3 - 2 * e));
      var o = (y * W + x) * 4;
      d[o] = c[0]; d[o + 1] = c[1]; d[o + 2] = c[2]; d[o + 3] = 255;
    }
  }
  ctx.putImageData(img, 0, 0);
}

drawGamut3D();
drawGamut2D();
```
